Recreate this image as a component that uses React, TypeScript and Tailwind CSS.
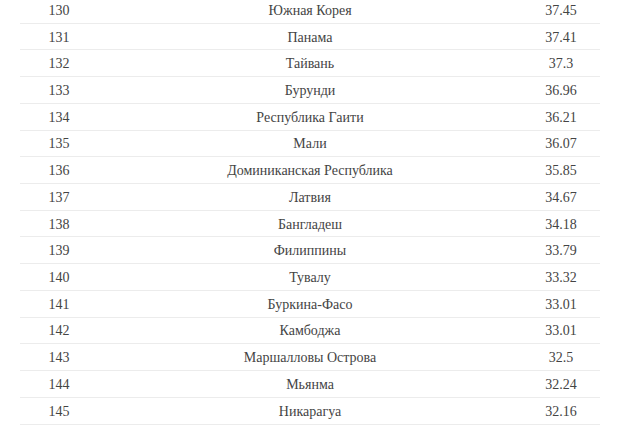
const rows: [number, string, string][] = [
  [130, "Южная Корея", "37.45"],
  [131, "Панама", "37.41"],
  [132, "Тайвань", "37.3"],
  [133, "Бурунди", "36.96"],
  [134, "Республика Гаити", "36.21"],
  [135, "Мали", "36.07"],
  [136, "Доминиканская Республика", "35.85"],
  [137, "Латвия", "34.67"],
  [138, "Бангладеш", "34.18"],
  [139, "Филиппины", "33.79"],
  [140, "Тувалу", "33.32"],
  [141, "Буркина-Фасо", "33.01"],
  [142, "Камбоджа", "33.01"],
  [143, "Маршалловы Острова", "32.5"],
  [144, "Мьянма", "32.24"],
  [145, "Никарагуа", "32.16"],
];

export default function App() {
  return (
    <div className="w-[620px] h-[427px] overflow-hidden bg-white">
      <div className="mx-[20px] -mt-[3px] font-['Liberation_Serif',serif] text-[14px] text-[#444]">
        {rows.map(([rank, country, value]) => (
          <div
            key={rank}
            className="grid grid-cols-[78px_1fr_78px] h-[26.73px] items-center border-b border-[#ececec] text-center"
          >
            <span className="pt-[1px]">{rank}</span>
            <span className="pt-[1px]">{country}</span>
            <span className="pt-[1px]">{value}</span>
          </div>
        ))}
      </div>
    </div>
  );
}
